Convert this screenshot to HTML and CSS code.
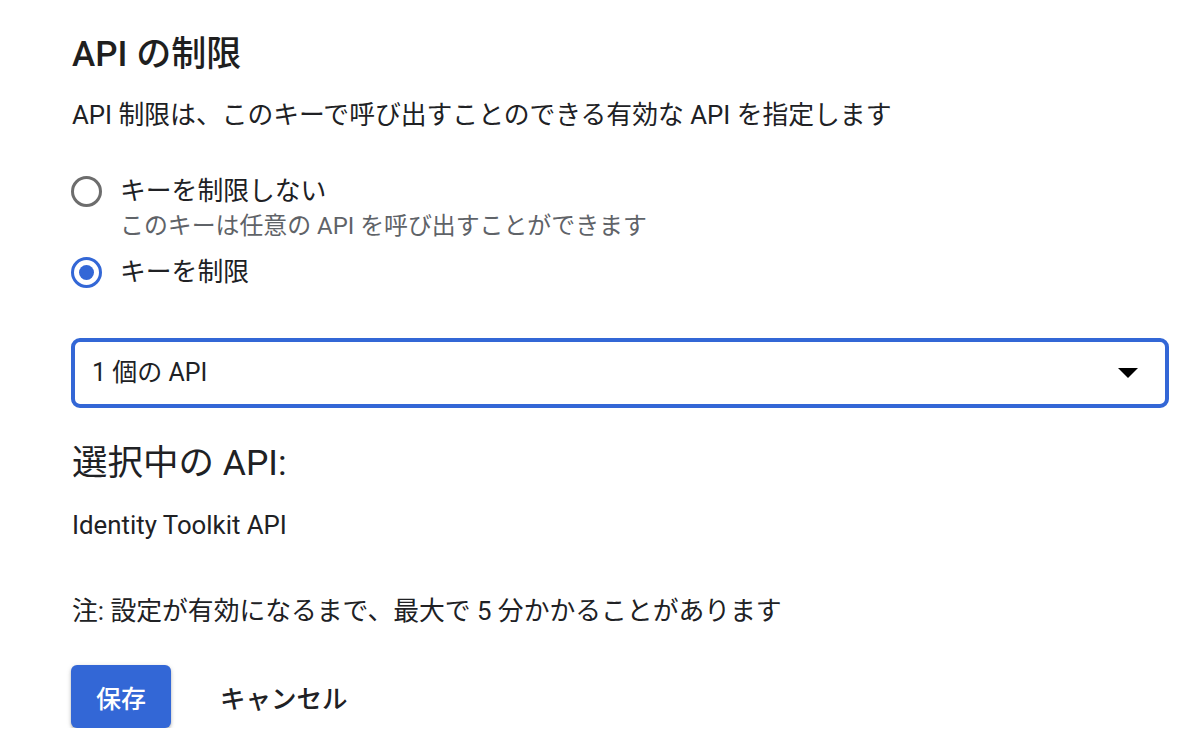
FILE: index.html
```html
<!DOCTYPE html>
<html lang="ja">
<head>
<meta charset="utf-8">
<title>API の制限</title>
<link rel="stylesheet" href="styles.css">
</head>
<body>
<main class="panel">
  <h2 class="title">API の制限</h2>
  <p class="desc">API 制限は、このキーで呼び出すことのできる有効な API を指定します</p>

  <div class="radio-group">
    <div class="radio-row">
      <span class="radio"></span>
      <span class="radio-label">キーを制限しない</span>
    </div>
    <div class="radio-hint">このキーは任意の API を呼び出すことができます</div>
    <div class="radio-row second">
      <span class="radio checked"><span class="dot"></span></span>
      <span class="radio-label">キーを制限</span>
    </div>
  </div>

  <div class="select">
    <span class="select-value">1 個の API</span>
    <svg class="caret" width="20" height="10" viewBox="0 0 20 10"><path d="M0 0 L20 0 L10 10 Z" fill="#000"/></svg>
  </div>

  <h3 class="subtitle">選択中の API:</h3>
  <div class="api-name">Identity Toolkit API</div>

  <p class="note">注: 設定が有効になるまで、最大で 5 分かかることがあります</p>

  <div class="actions">
    <button class="btn-primary">保存</button>
    <button class="btn-text">キャンセル</button>
  </div>
</main>
</body>
</html>
```

FILE: styles.css
```css
* { box-sizing: border-box; }
html, body {
  margin: 0;
  padding: 0;
  background: #ffffff;
}
body {
  font-family: Roboto, "Noto Sans CJK JP", sans-serif;
  color: #202124;
}
.panel {
  display: flex;
  flex-direction: column;
  align-items: flex-start;
  padding: 35px 32px 0 71px;
  width: 1200px;
}
.title {
  margin: 0 0 0 1px;
  font-size: 35px;
  line-height: 40px;
  font-weight: 500;
  color: #1f1f1f;
}
.desc {
  margin: 22px 0 0 1px;
  font-size: 25.8px;
  line-height: 36px;
  font-weight: 400;
}
.radio-group {
  margin-top: 40px;
  display: flex;
  flex-direction: column;
}
.radio-row {
  display: flex;
  align-items: center;
  height: 36px;
  gap: 18px;
}
.radio-row.second {
  margin-top: 13px;
}
.radio {
  width: 31px;
  height: 31px;
  border-radius: 50%;
  border: 3px solid #6d6d6d;
  display: flex;
  align-items: center;
  justify-content: center;
  flex: none;
}
.radio.checked {
  border-color: #3367d6;
}
.dot {
  width: 15px;
  height: 15px;
  border-radius: 50%;
  background: #3367d6;
}
.radio-label {
  font-size: 25.8px;
  line-height: 36px;
}
.radio-hint {
  margin: 2px 0 0 49px;
  font-size: 23.9px;
  line-height: 30px;
  color: #5f6368;
}
.select {
  margin-top: 48px;
  width: 1098px;
  height: 70px;
  border: 4px solid #3367d6;
  border-radius: 9px;
  display: flex;
  align-items: center;
  justify-content: space-between;
  padding: 0 27px 0 17px;
}
.select-value {
  font-size: 25px;
  line-height: 32px;
}
.caret {
  display: block;
}
.subtitle {
  margin: 33px 0 0 1px;
  font-size: 35.5px;
  line-height: 44px;
  font-weight: 400;
}
.api-name {
  margin: 22px 0 0 1px;
  font-size: 25.8px;
  line-height: 36px;
}
.note {
  margin: 50px 0 0 1px;
  font-size: 25.8px;
  line-height: 36px;
}
.actions {
  margin-top: 36px;
  display: flex;
  align-items: center;
  gap: 49px;
}
.btn-primary {
  width: 100px;
  height: 63px;
  border: none;
  border-radius: 6px;
  background: #3367d6;
  color: #ffffff;
  font-family: inherit;
  font-size: 25px;
  font-weight: 500;
  box-shadow: 0 2px 3px rgba(60,64,67,0.3), 0 1px 5px rgba(60,64,67,0.15);
  padding: 0;
}
.btn-text {
  border: none;
  background: transparent;
  padding: 0;
  font-family: inherit;
  font-size: 25.5px;
  font-weight: 500;
  color: #202124;
}
```
